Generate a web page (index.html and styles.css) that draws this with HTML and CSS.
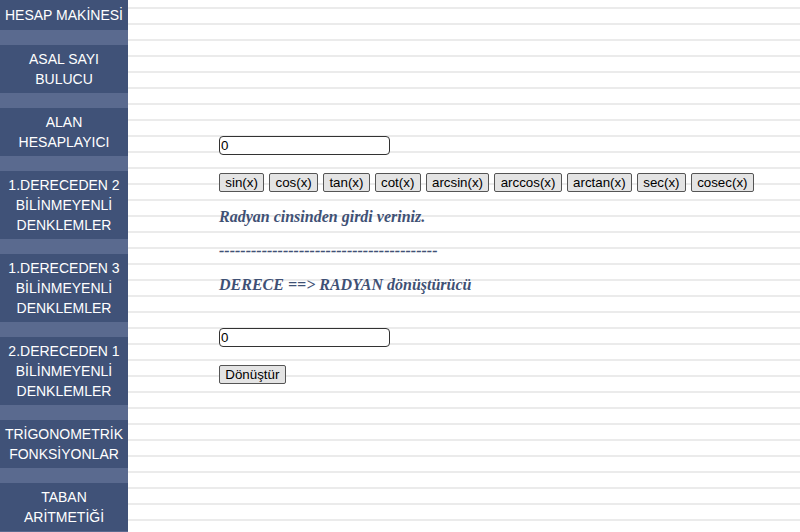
FILE: index.html
```html
<!DOCTYPE html>
<html lang="tr">
<head>
<meta charset="utf-8">
<link rel="stylesheet" href="styles.css">
</head>
<body>
<div class="page">
  <nav class="sidebar">
    <a class="item first">HESAP MAKİNESİ</a>
    <a class="item">ASAL SAYI<br>BULUCU</a>
    <a class="item">ALAN<br>HESAPLAYICI</a>
    <a class="item">1.DERECEDEN 2<br>BİLİNMEYENLİ<br>DENKLEMLER</a>
    <a class="item">1.DERECEDEN 3<br>BİLİNMEYENLİ<br>DENKLEMLER</a>
    <a class="item">2.DERECEDEN 1<br>BİLİNMEYENLİ<br>DENKLEMLER</a>
    <a class="item">TRİGONOMETRİK<br>FONKSİYONLAR</a>
    <a class="item">TABAN<br>ARİTMETİĞİ</a>
  </nav>
  <main class="content">
    <input class="field" type="text" value="0">
    <div class="buttons">
      <button class="btn">sin(x)</button>
      <button class="btn">cos(x)</button>
      <button class="btn">tan(x)</button>
      <button class="btn">cot(x)</button>
      <button class="btn">arcsin(x)</button>
      <button class="btn">arccos(x)</button>
      <button class="btn">arctan(x)</button>
      <button class="btn">sec(x)</button>
      <button class="btn">cosec(x)</button>
    </div>
    <p class="note first-note">Radyan cinsinden girdi veriniz.</p>
    <p class="note dashes">-----------------------------------------</p>
    <p class="note">DERECE ==&gt; RADYAN dönüştürücü</p>
    <input class="field field2" type="text" value="0">
    <div class="buttons">
      <button class="btn">Dönüştür</button>
    </div>
  </main>
</div>
</body>
</html>
```

FILE: styles.css
```css
html, body {
  margin: 0;
  padding: 0;
  height: 100%;
}
body {
  background: repeating-linear-gradient(to bottom, #ffffff 0, #ffffff 7px, #ebebeb 7px, #ebebeb 9px, #ffffff 9px, #ffffff 16px);
  font-family: "Liberation Sans", Arial, sans-serif;
  overflow: hidden;
}
.page {
  display: flex;
  align-items: flex-start;
}
.sidebar {
  width: 128px;
  flex: none;
  display: flex;
  flex-direction: column;
  background: #5a6a8f;
  min-height: 532px;
}
.item {
  display: block;
  background: #405278;
  color: #ffffff;
  text-align: center;
  font-size: 14px;
  line-height: 20px;
  padding: 4px 0;
  margin-bottom: 15px;
}
.item.first {
  padding: 5px 0;
}
.content {
  padding: 136px 0 0 91px;
  display: flex;
  flex-direction: column;
  align-items: flex-start;
}
.field {
  box-sizing: border-box;
  width: 171px;
  height: 19px;
  border: 1px solid #333;
  border-radius: 4px;
  padding: 0 1px;
  margin: 0;
  font-family: "Liberation Sans", Arial, sans-serif;
  font-size: 13.333px;
  color: #000;
  background: #fff;
}
.buttons {
  display: flex;
  gap: 5px;
  margin-top: 18px;
}
.btn {
  box-sizing: border-box;
  height: 19px;
  padding: 0 5.3px;
  margin: 0;
  border: 1px solid #555;
  border-radius: 2px;
  background: #e4e4e4;
  font-family: "Liberation Sans", Arial, sans-serif;
  font-size: 13.333px;
  line-height: 17px;
  color: #000;
}
.note {
  margin: 14px 0 0;
  font-family: "Liberation Serif", "Times New Roman", serif;
  font-style: italic;
  font-weight: bold;
  font-size: 16px;
  line-height: 20px;
  color: #3f5175;
}
.first-note {
  margin-top: 15px;
}
.field2 {
  margin-top: 33px;
}
```
